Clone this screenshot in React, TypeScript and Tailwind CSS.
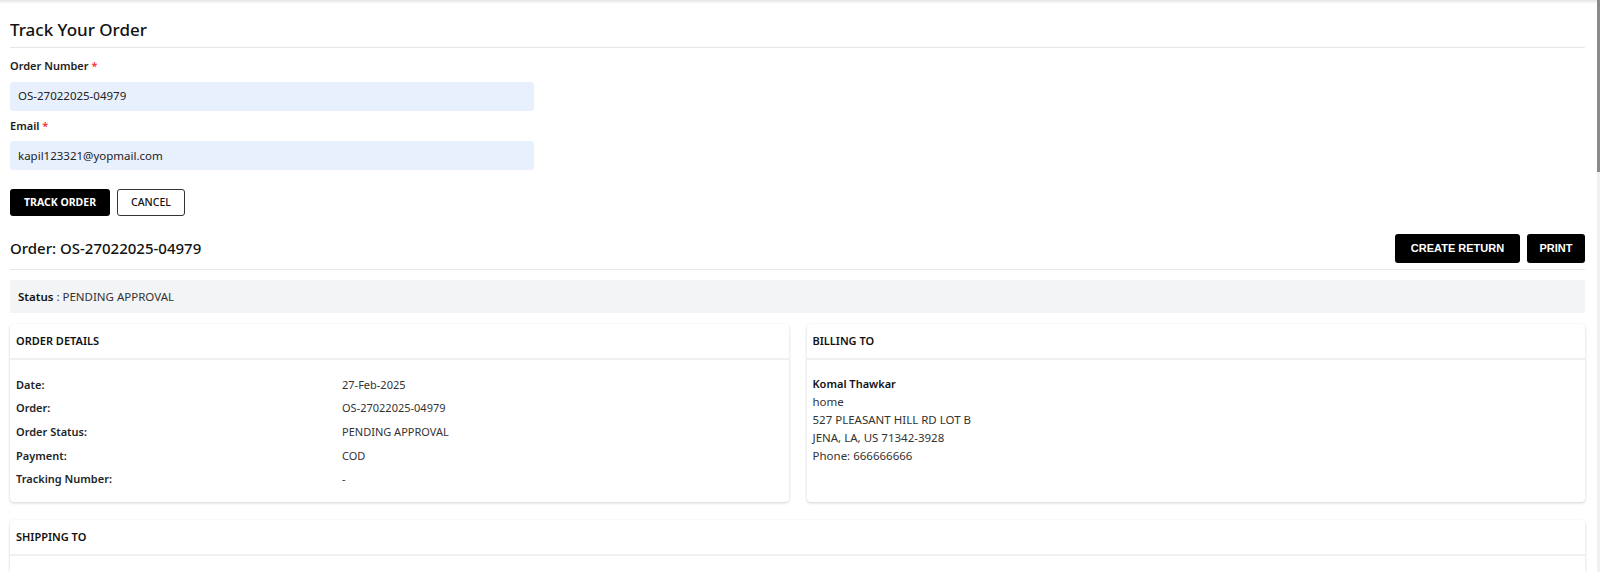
import React from "react";

const font = { fontFamily: '"Noto Sans", "Open Sans", Arial, sans-serif' };

function Row({ label, value }: { label: string; value: string }) {
  return (
    <div className="flex h-[23.7px] items-center text-[11px] text-[#212529]">
      <div className="w-[326px] font-semibold">{label}</div>
      <div className="text-[#333]">{value}</div>
    </div>
  );
}

export default function App() {
  return (
    <div className="relative h-[572px] w-[1600px] overflow-hidden bg-white" style={font}>
      <div className="absolute left-0 right-0 top-0 h-[4px] bg-gradient-to-b from-[#e5e5e5] to-white" />
      <div className="absolute right-0 top-0 h-full w-[3px] bg-[#f1f1f1]">
        <div className="h-[172px] w-full bg-[#8a8a8a]" />
      </div>
      <div className="w-[1585px] pl-[10px] pt-[18px]">
        <h1 className="h-[29px] text-[17px] font-medium leading-[24px] text-[#111]">Track Your Order</h1>
        <div className="border-b border-[#e5e7eb]" />
        <div className="mt-[10px] text-[11px] font-semibold text-[#222]">
          Order Number <span className="text-red-500">*</span>
        </div>
        <div className="mt-[7px] flex h-[29px] w-[524px] items-center rounded-[3px] bg-[#e8f0fe] pl-[8px] text-[11.5px] text-[#222]">
          OS-27022025-04979
        </div>
        <div className="mt-[7px] text-[11px] font-semibold text-[#222]">
          Email <span className="text-red-500">*</span>
        </div>
        <div className="mt-[7px] flex h-[29px] w-[524px] items-center rounded-[3px] bg-[#e8f0fe] pl-[8px] text-[11.5px] text-[#222]">
          kapil123321@yopmail.com
        </div>
        <div className="mt-[19px] flex gap-[7px]">
          <button className="h-[27px] w-[100px] rounded-[3px] bg-black text-[10.5px] font-bold text-white">TRACK ORDER</button>
          <button className="h-[27px] w-[68px] rounded-[3px] border border-[#333] bg-white text-[10.5px] font-medium text-[#111]">CANCEL</button>
        </div>
        <div className="mt-[18px] flex items-center justify-between">
          <div className="text-[15px] font-medium text-[#111]">Order: OS-27022025-04979</div>
          <div className="flex gap-[7px]">
            <button className="h-[29px] w-[125px] rounded-[3px] bg-black text-[11px] font-bold text-white" style={{ fontFamily: '"Liberation Sans", Arial, sans-serif' }}>CREATE RETURN</button>
            <button className="h-[29px] w-[58px] rounded-[3px] bg-black text-[11px] font-bold text-white" style={{ fontFamily: '"Liberation Sans", Arial, sans-serif' }}>PRINT</button>
          </div>
        </div>
        <div className="mt-[6px] border-b border-[#e5e7eb]" />
        <div className="mt-[10px] flex h-[33px] items-center bg-[#f3f4f6] pl-[8px] text-[11.5px] text-[#333]">
          <span className="font-semibold text-[#111]">Status</span>&nbsp;: PENDING APPROVAL
        </div>
        <div className="mt-[11px] grid grid-cols-2 gap-[18px]">
          <div className="h-[178px] rounded-[4px] bg-white shadow-[0_1px_3px_rgba(0,0,0,0.18)]">
            <div className="flex h-[36px] items-center border-b-2 border-[#f0f0f0] pl-[6px] text-[11px] font-semibold text-[#111]">ORDER DETAILS</div>
            <div className="px-[6px] pt-[13px]">
              <Row label="Date:" value="27-Feb-2025" />
              <Row label="Order:" value="OS-27022025-04979" />
              <Row label="Order Status:" value="PENDING APPROVAL" />
              <Row label="Payment:" value="COD" />
              <Row label="Tracking Number:" value="-" />
            </div>
          </div>
          <div className="h-[178px] rounded-[4px] bg-white shadow-[0_1px_3px_rgba(0,0,0,0.18)]">
            <div className="flex h-[36px] items-center border-b-2 border-[#f0f0f0] pl-[6px] text-[11px] font-semibold text-[#111]">BILLING TO</div>
            <div className="px-[6px] pt-[15px] text-[11.5px] leading-[18px] text-[#333]">
              <div className="text-[11px] font-semibold text-[#111]">Komal Thawkar</div>
              <div>home</div>
              <div>527 PLEASANT HILL RD LOT B</div>
              <div>JENA, LA, US 71342-3928</div>
              <div>Phone: 666666666</div>
            </div>
          </div>
        </div>
        <div className="mt-[18px] h-[80px] rounded-[4px] bg-white shadow-[0_1px_3px_rgba(0,0,0,0.18)]">
          <div className="flex h-[36px] items-center border-b-2 border-[#f0f0f0] pl-[6px] text-[11px] font-semibold text-[#111]">SHIPPING TO</div>
        </div>
      </div>
    </div>
  );
}
